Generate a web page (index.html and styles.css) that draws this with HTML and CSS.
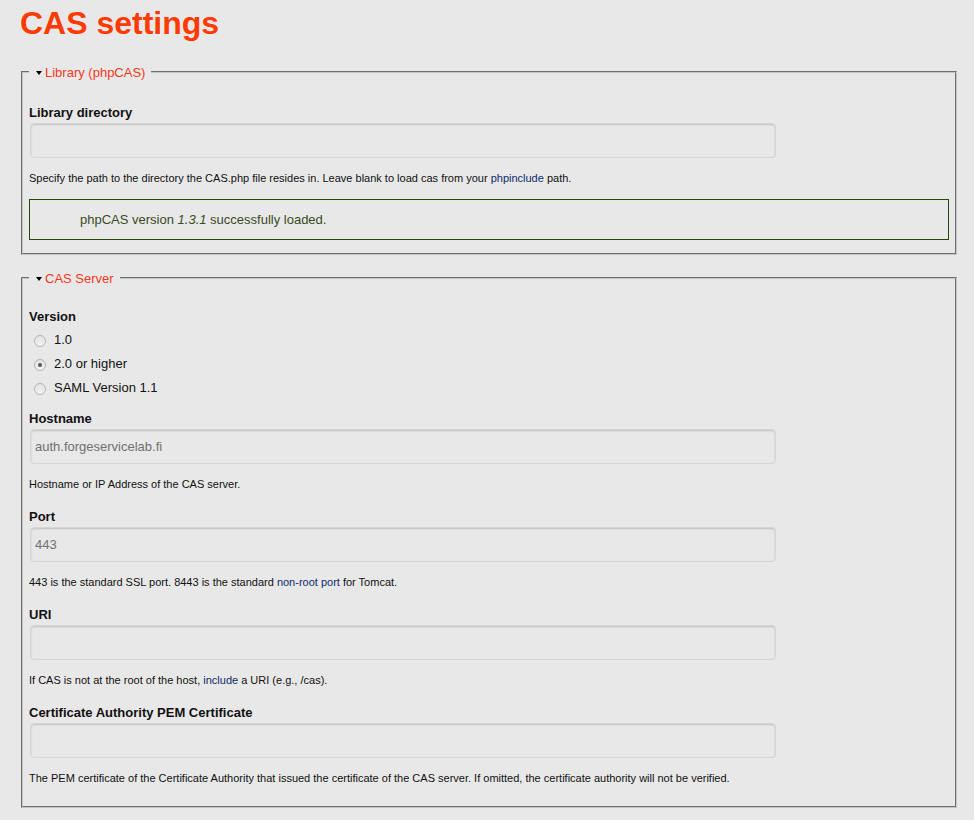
FILE: index.html
```html
<!DOCTYPE html>
<html lang="en">
<head>
<meta charset="utf-8">
<title>CAS settings</title>
<link rel="stylesheet" href="styles.css">
</head>
<body>
<div class="page">
  <h1 class="page-title">CAS settings</h1>

  <fieldset class="group group-first">
    <legend class="group-legend"><span class="caret"></span>Library (phpCAS)</legend>
    <div class="form-item form-item-lib">
      <label class="form-label" for="lib">Library directory</label>
      <input class="form-text" id="lib" type="text" value="">
      <div class="description">Specify the path to the directory the CAS.php file resides in. Leave blank to load cas from your <a class="gloss" href="#">phpinclude</a> path.</div>
    </div>
    <div class="message-ok">phpCAS version <em>1.3.1</em> successfully loaded.</div>
  </fieldset>

  <fieldset class="group group-last">
    <legend class="group-legend"><span class="caret"></span>CAS Server</legend>
    <div class="form-item">
      <div class="form-label">Version</div>
      <div class="radios">
        <label class="radio-row"><input class="radio" type="radio" name="ver"><span>1.0</span></label>
        <label class="radio-row"><input class="radio" type="radio" name="ver" checked><span>2.0 or higher</span></label>
        <label class="radio-row"><input class="radio" type="radio" name="ver"><span>SAML Version 1.1</span></label>
      </div>
    </div>
    <div class="form-item">
      <label class="form-label" for="host">Hostname</label>
      <input class="form-text" id="host" type="text" value="auth.forgeservicelab.fi">
      <div class="description">Hostname or IP Address of the CAS server.</div>
    </div>
    <div class="form-item">
      <label class="form-label" for="port">Port</label>
      <input class="form-text" id="port" type="text" value="443">
      <div class="description">443 is the standard SSL port. 8443 is the standard <a class="gloss" href="#">non-root port</a> for Tomcat.</div>
    </div>
    <div class="form-item">
      <label class="form-label" for="uri">URI</label>
      <input class="form-text" id="uri" type="text" value="">
      <div class="description">If CAS is not at the root of the host, <a class="gloss" href="#">include</a> a URI (e.g., /cas).</div>
    </div>
    <div class="form-item">
      <label class="form-label" for="pem">Certificate Authority PEM Certificate</label>
      <input class="form-text" id="pem" type="text" value="">
      <div class="description">The PEM certificate of the Certificate Authority that issued the certificate of the CAS server. If omitted, the certificate authority will not be verified.</div>
    </div>
  </fieldset>
</div>
</body>
</html>
```

FILE: styles.css
```css
html, body {
  margin: 0;
  padding: 0;
  background: #e8e8e8;
}
body {
  font-family: "Liberation Sans", Arial, sans-serif;
  color: #111;
  font-size: 13px;
}
.page {
  padding: 0 16px 0 20px;
}
.page-title {
  margin: 0;
  padding-top: 4px;
  font-size: 32px;
  line-height: 38px;
  font-weight: bold;
  color: #ff3a00;
}
.group {
  margin: 21px 1px 0 1px;
  padding: 23px 6px 13px 6px;
  border: 2px groove #c4c4c4;
  min-width: 0;
}
.group + .group {
  margin-top: 14px;
}
.group-last {
  padding-top: 21px;
  padding-bottom: 4px;
}
.group-legend {
  padding: 2px 6px 0 7px;
  font-size: 13px;
  line-height: 16px;
  color: #f5391c;
}
.caret {
  display: inline-block;
  width: 0;
  height: 0;
  border-left: 3.5px solid transparent;
  border-right: 3.5px solid transparent;
  border-top: 4px solid #000;
  margin-right: 3px;
  vertical-align: 2px;
}
.form-item {
  margin: 0 0 17px;
}
.form-item-lib {
  margin-bottom: 14px;
}
.form-label {
  display: block;
  font-weight: bold;
  font-size: 13px;
  line-height: 17px;
  margin-bottom: 2px;
  color: #111;
}
.form-text {
  display: block;
  box-sizing: border-box;
  width: 746px;
  height: 35px;
  margin: 0 0 0 1px;
  padding: 0 4px;
  border: 1px solid #d6d6d6;
  border-radius: 4px;
  background: #e8e8e8;
  box-shadow: inset 0 1px 2px rgba(0, 0, 0, 0.18);
  font-family: "Liberation Sans", Arial, sans-serif;
  font-size: 13px;
  color: #707070;
  outline: none;
}
.description {
  margin-top: 13px;
  font-size: 11px;
  line-height: 14px;
  color: #111;
}
.gloss {
  color: #0c2a6a;
  text-decoration: none;
}
.message-ok {
  margin: 0;
  height: 41px;
  box-sizing: border-box;
  border: 1px solid #244800;
  padding: 0 0 0 50px;
  line-height: 39px;
  font-size: 13px;
  color: #3b4a1e;
}
.message-ok em {
  font-style: italic;
}
.radios {
  margin-top: 2px;
  margin-bottom: -6px;
}
.radio-row {
  display: flex;
  align-items: center;
  height: 24px;
  font-size: 13px;
}
.radio {
  appearance: none;
  -webkit-appearance: none;
  box-sizing: border-box;
  width: 12px;
  height: 12px;
  margin: 4px 8px 0 5px;
  border: 1px solid #b4b4b4;
  border-radius: 50%;
  background: linear-gradient(#e2e2e2, #f2f2f2);
  display: inline-flex;
  align-items: center;
  justify-content: center;
}
.radio:checked::after {
  content: "";
  width: 4px;
  height: 4px;
  border-radius: 50%;
  background: #555;
}
```
